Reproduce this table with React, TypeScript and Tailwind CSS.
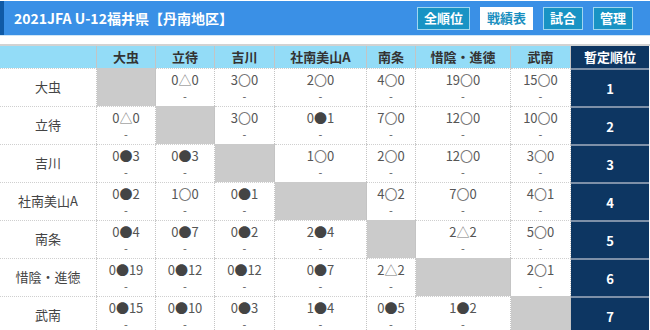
import React from 'react'

const teams = ['大虫', '立待', '吉川', '社南美山A', '南条', '惜陰・進徳', '武南']

type Result = [number, 'W' | 'L' | 'D', number] | null

// null = own cell (gray)
const results: Result[][] = [
  [null, [0, 'D', 0], [3, 'W', 0], [2, 'W', 0], [4, 'W', 0], [19, 'W', 0], [15, 'W', 0]],
  [[0, 'D', 0], null, [3, 'W', 0], [0, 'L', 1], [7, 'W', 0], [12, 'W', 0], [10, 'W', 0]],
  [[0, 'L', 3], [0, 'L', 3], null, [1, 'W', 0], [2, 'W', 0], [12, 'W', 0], [3, 'W', 0]],
  [[0, 'L', 2], [1, 'W', 0], [0, 'L', 1], null, [4, 'W', 2], [7, 'W', 0], [4, 'W', 1]],
  [[0, 'L', 4], [0, 'L', 7], [0, 'L', 2], [2, 'L', 4], null, [2, 'D', 2], [5, 'W', 0]],
  [[0, 'L', 19], [0, 'L', 12], [0, 'L', 12], [0, 'L', 7], [2, 'D', 2], null, [2, 'W', 1]],
  [[0, 'L', 15], [0, 'L', 10], [0, 'L', 3], [1, 'L', 4], [0, 'L', 5], [1, 'L', 2], null],
]

const marks = { W: '〇', L: '●', D: '△' }

const cols = 'grid grid-cols-[97px_59px_59px_60px_92px_49px_95px_60px_78px]'

function Score({ value }: { value: [number, 'W' | 'L' | 'D', number] }) {
  const [a, m, b] = value
  return (
    <span className="whitespace-nowrap">
      {a}
      <span className={m === 'L' ? 'text-[#444]' : 'text-[#777]'}>{marks[m]}</span>
      {b}
    </span>
  )
}

function NavButton({ label, active }: { label: string; active?: boolean }) {
  return (
    <div
      className={
        active
          ? 'h-[23px] px-[6px] flex items-center bg-white text-[#1a8fc0] border border-white text-[13px] font-bold'
          : 'h-[23px] px-[6px] flex items-center bg-[#1893c4] text-white border border-[#9fd6f0] text-[13px] font-bold'
      }
    >
      {label}
    </div>
  )
}

export default function App() {
  return (
    <div className="w-[650px] h-[330px] overflow-hidden bg-white font-['Noto_Sans_CJK_JP',sans-serif] text-[#555]">
      <div className="pt-px border-b border-[#cfe6f7]">
        <div className="h-[34px] flex items-center bg-[#3a90e6] border-l-4 border-[#0f5aa6]">
          <h1 className="pl-[10px] text-white text-[14px] font-bold">
            2021JFA U-12福井県【丹南地区】
          </h1>
          <div className="ml-auto mr-[17px] flex gap-[10px]">
            <NavButton label="全順位" />
            <NavButton label="戦績表" active />
            <NavButton label="試合" />
            <NavButton label="管理" />
          </div>
        </div>
      </div>

      <div className="mt-[8px] border-t-2 border-[#d2d2d2]">
        <div className={`${cols} h-[22px] text-[13px] font-bold text-[#333]`}>
          <div className="bg-[#93dcf7] border-r border-[#c4c4c4]" />
          {teams.map((t) => (
            <div key={t} className="bg-[#93dcf7] border-r border-[#c4c4c4] flex items-center justify-center">
              {t}
            </div>
          ))}
          <div className="bg-[#0d3662] text-white flex items-center justify-center">暫定順位</div>
        </div>

        {teams.map((t, i) => (
          <div key={t} className={`${cols} h-[38px] text-[13px]`}>
            <div className="border-r border-[#c4c4c4] border-t border-dotted border-t-[#cfcfcf] flex items-center justify-center text-[#444] pb-[2px]">
              {t}
            </div>
            {results[i].map((r, j) =>
              r === null ? (
                <div key={j} className="bg-[#cbcbcb] border-r border-[#c4c4c4]" />
              ) : (
                <div
                  key={j}
                  className="border-r border-[#c4c4c4] border-t border-dotted border-t-[#cfcfcf] flex flex-col items-center leading-[17px] pt-[2px]"
                >
                  <Score value={r} />
                  <span className="text-[11px] leading-[17px]">-</span>
                </div>
              ),
            )}
            <div className="bg-[#0d3662] border-t-2 border-[#7d90a8] text-white font-bold flex items-center justify-center pt-[2px]">
              {i + 1}
            </div>
          </div>
        ))}
      </div>
    </div>
  )
}
